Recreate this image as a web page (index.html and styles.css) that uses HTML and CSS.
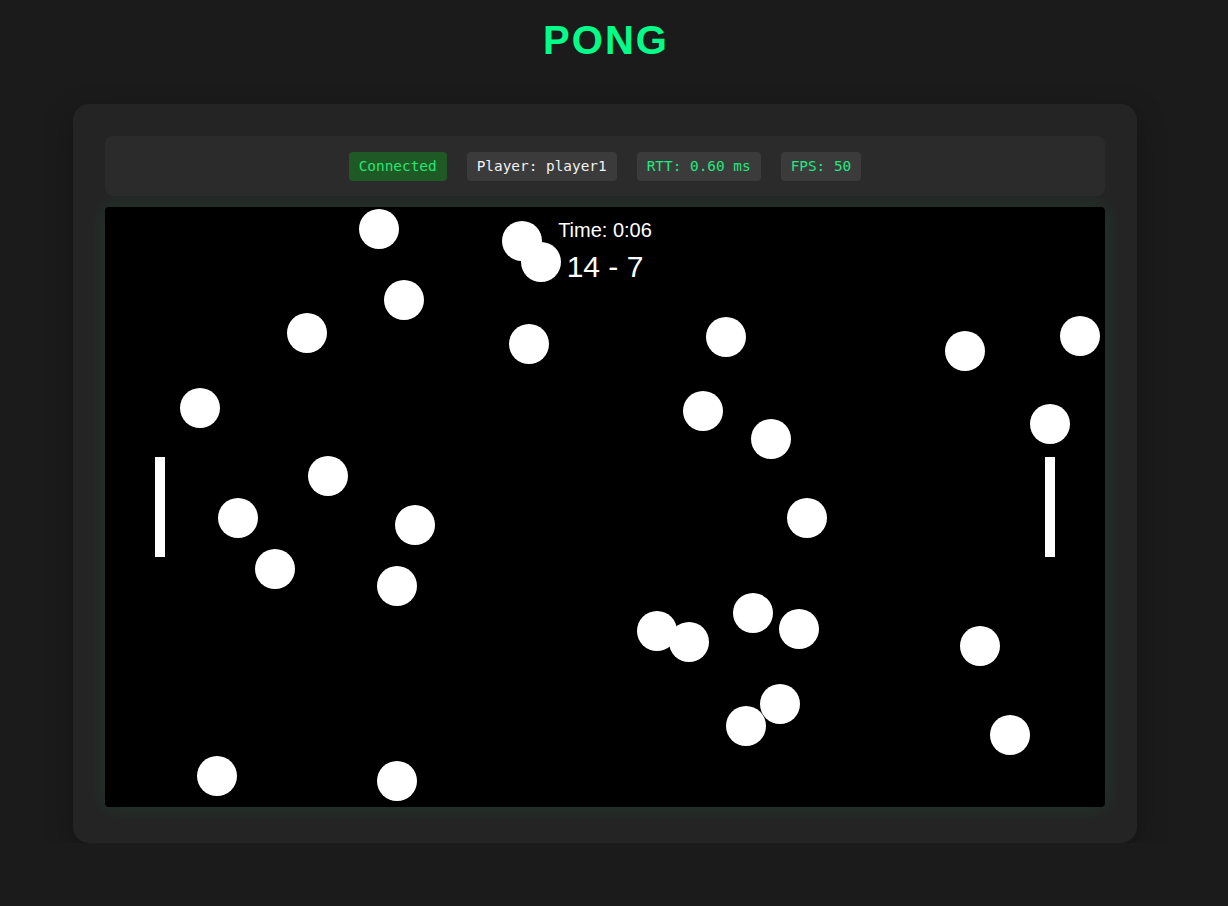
FILE: index.html
```html
<!DOCTYPE html>
<html>
<head>
<meta charset="utf-8">
<link rel="stylesheet" href="styles.css">
</head>
<body>
<div class="page">
  <h1 class="title">PONG</h1>
  <div class="game-container">
    <div class="status-bar">
      <span class="badge badge-connected">Connected</span>
      <span class="badge badge-player">Player: player1</span>
      <span class="badge badge-green">RTT: 0.60 ms</span>
      <span class="badge badge-green">FPS: 50</span>
    </div>
    <div class="canvas">
      <svg width="1000" height="600" viewBox="0 0 1000 600">
        <rect x="50" y="250" width="10" height="100" fill="#fff"/>
        <rect x="940" y="250" width="10" height="100" fill="#fff"/>
        <g fill="#fff">
          <circle cx="274" cy="22" r="20"/>
          <circle cx="417" cy="34" r="20"/>
          <circle cx="436" cy="55" r="20"/>
          <circle cx="299" cy="93" r="20"/>
          <circle cx="202" cy="126" r="20"/>
          <circle cx="424" cy="137" r="20"/>
          <circle cx="621" cy="130" r="20"/>
          <circle cx="860" cy="144" r="20"/>
          <circle cx="975" cy="129" r="20"/>
          <circle cx="95" cy="201" r="20"/>
          <circle cx="598" cy="204" r="20"/>
          <circle cx="666" cy="232" r="20"/>
          <circle cx="945" cy="217" r="20"/>
          <circle cx="223" cy="269" r="20"/>
          <circle cx="133" cy="311" r="20"/>
          <circle cx="310" cy="318" r="20"/>
          <circle cx="702" cy="311" r="20"/>
          <circle cx="170" cy="362" r="20"/>
          <circle cx="292" cy="379" r="20"/>
          <circle cx="552" cy="424" r="20"/>
          <circle cx="584" cy="435" r="20"/>
          <circle cx="648" cy="406" r="20"/>
          <circle cx="694" cy="422" r="20"/>
          <circle cx="875" cy="439" r="20"/>
          <circle cx="675" cy="497" r="20"/>
          <circle cx="641" cy="519" r="20"/>
          <circle cx="905" cy="528" r="20"/>
          <circle cx="112" cy="569" r="20"/>
          <circle cx="292" cy="574" r="20"/>
        </g>
        <text x="500" y="30" class="time-text" text-anchor="middle">Time: 0:06</text>
        <text x="500" y="70" class="score-text" text-anchor="middle">14 - 7</text>
      </svg>
    </div>
  </div>
</div>
</body>
</html>
```

FILE: styles.css
```css
html, body {
  margin: 0;
  padding: 0;
  background: #1b1b1b;
}
body {
  font-family: "Liberation Sans", Arial, sans-serif;
  color: #fff;
}
.page {
  width: 1210px;
  display: flex;
  flex-direction: column;
  align-items: center;
  padding-top: 16px;
}
.title {
  margin: 0;
  font-size: 40px;
  line-height: 48px;
  font-weight: bold;
  letter-spacing: 2px;
  color: #00ff88;
  padding-left: 2px;
}
.game-container {
  margin-top: 40px;
  background: #242424;
  border-radius: 16px;
  padding: 32px 32px 36px;
  box-shadow: 0 10px 30px rgba(0, 0, 0, 0.3);
}
.status-bar {
  width: 1000px;
  height: 60px;
  box-sizing: border-box;
  background: #2b2b2b;
  border-radius: 8px;
  display: flex;
  align-items: center;
  justify-content: center;
  gap: 20px;
  margin-bottom: 11px;
  padding-top: 1px;
}
.badge {
  font-family: "DejaVu Sans Mono", "Liberation Mono", monospace;
  font-size: 14.4px;
  line-height: 19px;
  padding: 5px 10px;
  border-radius: 4px;
  background: #3b3b3b;
}
.badge-connected {
  background: #1f5a26;
  color: #22e870;
}
.badge-player {
  color: #f2f2f2;
}
.badge-green {
  color: #22e880;
}
.canvas {
  width: 1000px;
  height: 600px;
  background: #000;
  border-radius: 4px;
  box-shadow: 0 0 20px rgba(0, 255, 136, 0.1);
  overflow: hidden;
}
.canvas svg {
  display: block;
}
.time-text {
  font-family: "Liberation Sans", Arial, sans-serif;
  font-size: 20px;
  fill: #fff;
}
.score-text {
  font-family: "Liberation Sans", Arial, sans-serif;
  font-size: 30px;
  fill: #fff;
}
```
